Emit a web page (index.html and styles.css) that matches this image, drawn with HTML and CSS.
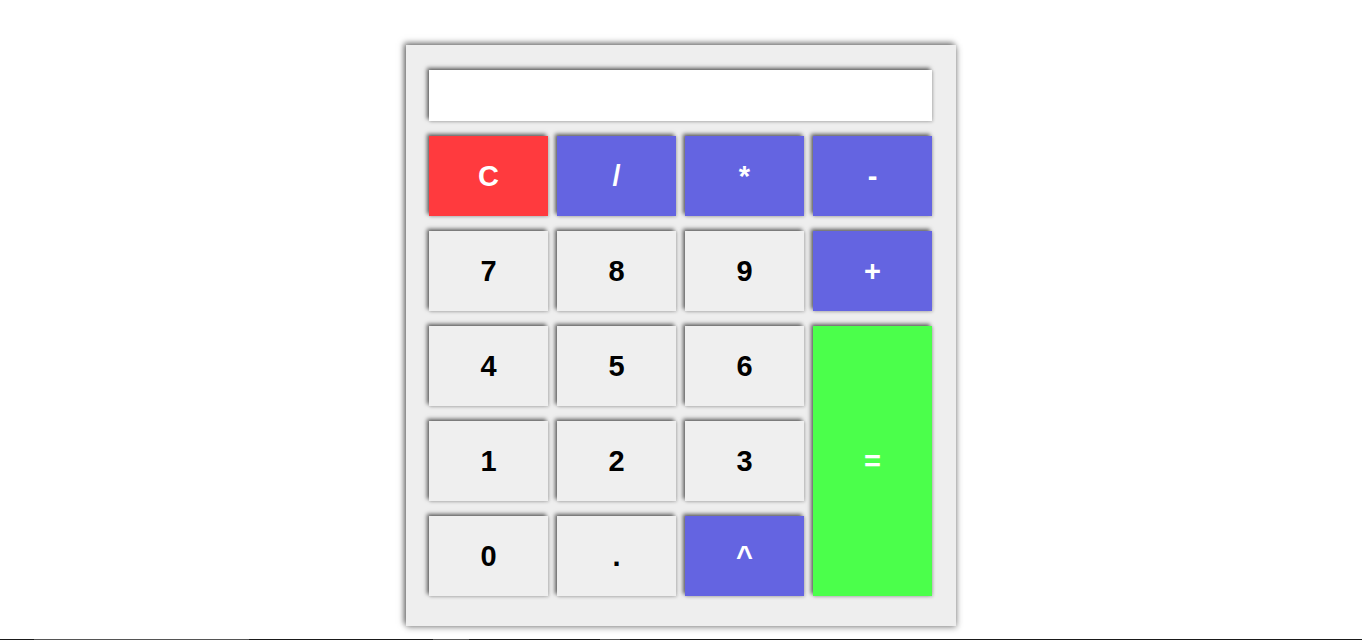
FILE: index.html
```html
<!DOCTYPE html>
<html>
<head>
<meta charset="utf-8">
<link rel="stylesheet" href="styles.css">
</head>
<body>
<div class="calc">
  <input class="display" type="text">
  <div class="keys">
    <button class="key red">C</button>
    <button class="key blue">/</button>
    <button class="key blue">*</button>
    <button class="key blue">-</button>
    <button class="key">7</button>
    <button class="key">8</button>
    <button class="key">9</button>
    <button class="key blue">+</button>
    <button class="key">4</button>
    <button class="key">5</button>
    <button class="key">6</button>
    <button class="key green eq">=</button>
    <button class="key">1</button>
    <button class="key">2</button>
    <button class="key">3</button>
    <button class="key">0</button>
    <button class="key">.</button>
    <button class="key blue">^</button>
  </div>
</div>
<div class="edge"></div>
</body>
</html>
```
FILE: styles.css
```css
html, body {
  margin: 0;
  padding: 0;
  background: #fff;
  font-family: "Liberation Sans", Arial, sans-serif;
}
body {
  height: 640px;
  overflow: hidden;
}
.calc {
  width: 550px;
  box-sizing: border-box;
  margin: 45px auto 0;
  padding: 25px 24px 30px 23px;
  background: #eeeeee;
  box-shadow: -2px -2px 6px rgba(0,0,0,0.55), 1px 2px 6px rgba(0,0,0,0.3);
  display: flex;
  flex-direction: column;
  gap: 15px;
}
.display {
  display: block;
  width: 503px;
  height: 51px;
  box-sizing: border-box;
  border: none;
  margin: 0;
  padding: 0 10px;
  background: #fff;
  outline: none;
  box-shadow: -2px -2px 4px rgba(0,0,0,0.6), 1px 1px 3px rgba(0,0,0,0.2);
}
.keys {
  display: grid;
  grid-template-columns: repeat(4, 119px);
  grid-auto-rows: 80px;
  column-gap: 9px;
  row-gap: 15px;
}
.key {
  border: none;
  margin: 0;
  padding: 0;
  background: #efefef;
  color: #000;
  font-family: "Liberation Sans", Arial, sans-serif;
  font-weight: bold;
  font-size: 29px;
  box-shadow: -2px -2px 4px rgba(0,0,0,0.6), 1px 1px 3px rgba(0,0,0,0.2);
}
.red { background: #ff3a3e; color: #fff; }
.blue { background: #6464e1; color: #fff; }
.green { background: #4bff4b; color: #fff; }
.eq {
  grid-column: 4;
  grid-row: 3 / span 3;
}
.edge {
  position: fixed;
  left: 0;
  right: 0;
  bottom: 0;
  height: 1px;
  background: linear-gradient(to right, #1a1a1a 0, #1a1a1a 34px, #555 34px, #555 249px, #1a1a1a 249px, #1a1a1a 433px, #555 433px, #555 469px, #1a1a1a 469px, #1a1a1a 600px, #555 600px, #555 620px, #1a1a1a 620px);
}
```
